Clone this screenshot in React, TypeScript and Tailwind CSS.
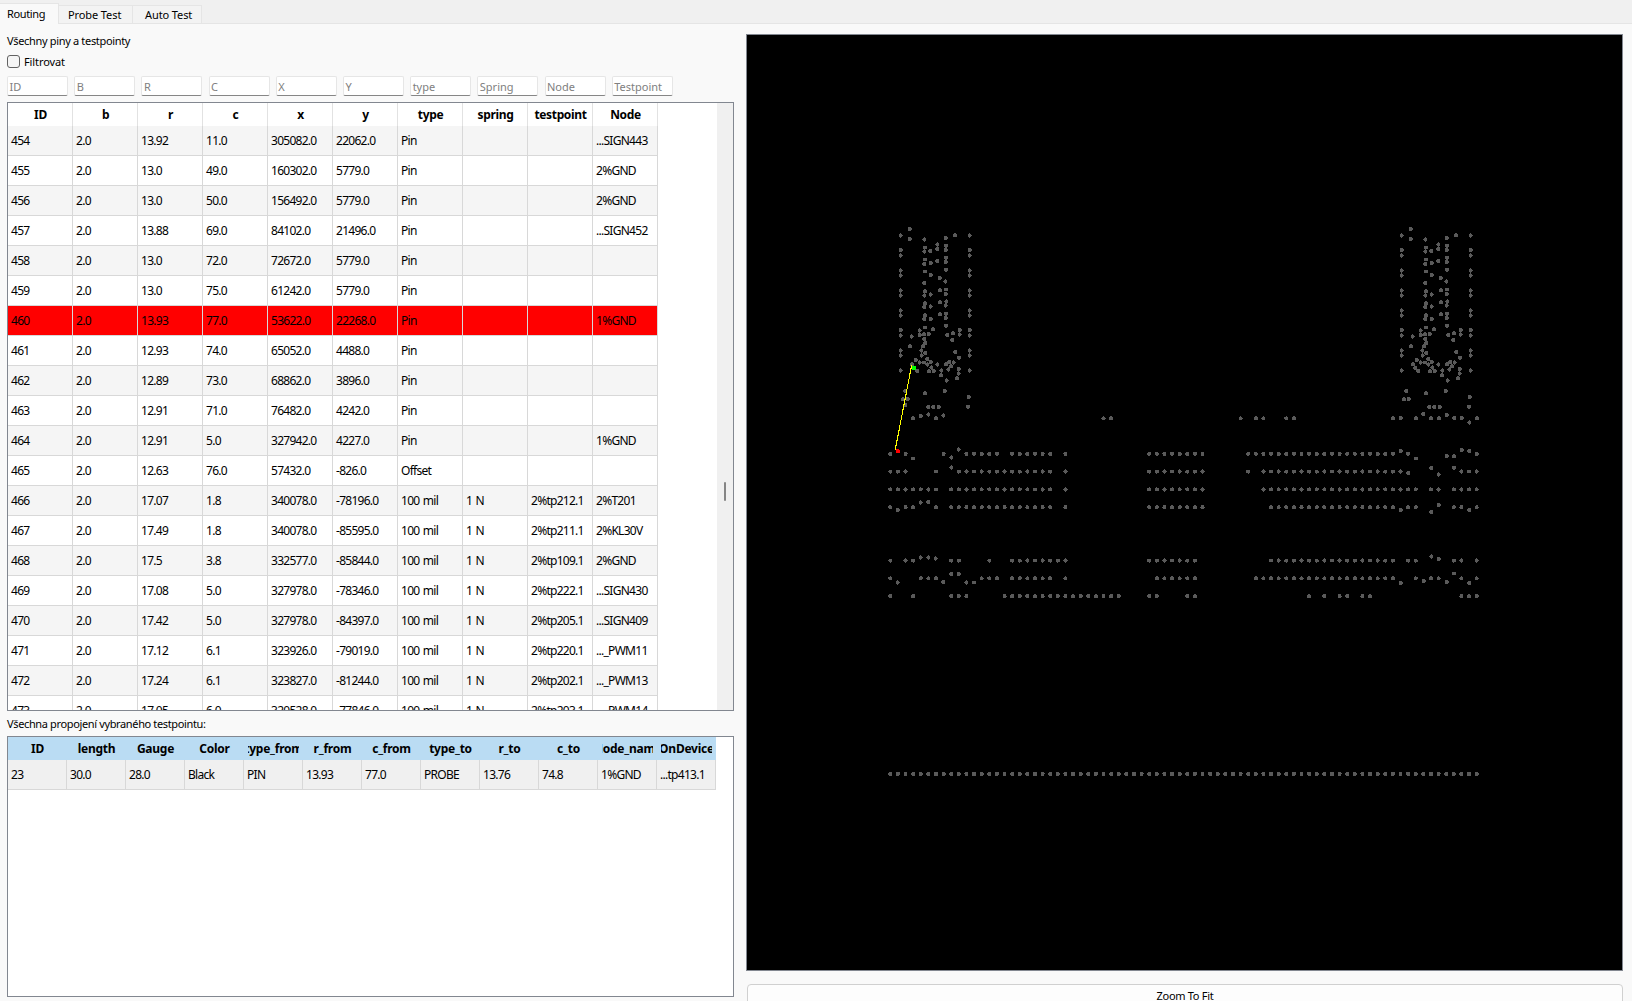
import React from "react";

const FILTERS = ["ID", "B", "R", "C", "X", "Y", "type", "Spring", "Node", "Testpoint"];
const PIN_HEADERS = ["ID", "b", "r", "c", "x", "y", "type", "spring", "testpoint", "Node"];
const PINS: string[][] = [
  ["454", "2.0", "13.92", "11.0", "305082.0", "22062.0", "Pin", "", "", "...SIGN443"],
  ["455", "2.0", "13.0", "49.0", "160302.0", "5779.0", "Pin", "", "", "2%GND"],
  ["456", "2.0", "13.0", "50.0", "156492.0", "5779.0", "Pin", "", "", "2%GND"],
  ["457", "2.0", "13.88", "69.0", "84102.0", "21496.0", "Pin", "", "", "...SIGN452"],
  ["458", "2.0", "13.0", "72.0", "72672.0", "5779.0", "Pin", "", "", ""],
  ["459", "2.0", "13.0", "75.0", "61242.0", "5779.0", "Pin", "", "", ""],
  ["460", "2.0", "13.93", "77.0", "53622.0", "22268.0", "Pin", "", "", "1%GND"],
  ["461", "2.0", "12.93", "74.0", "65052.0", "4488.0", "Pin", "", "", ""],
  ["462", "2.0", "12.89", "73.0", "68862.0", "3896.0", "Pin", "", "", ""],
  ["463", "2.0", "12.91", "71.0", "76482.0", "4242.0", "Pin", "", "", ""],
  ["464", "2.0", "12.91", "5.0", "327942.0", "4227.0", "Pin", "", "", "1%GND"],
  ["465", "2.0", "12.63", "76.0", "57432.0", "-826.0", "Offset", "", "", ""],
  ["466", "2.0", "17.07", "1.8", "340078.0", "-78196.0", "100 mil", "1 N", "2%tp212.1", "2%T201"],
  ["467", "2.0", "17.49", "1.8", "340078.0", "-85595.0", "100 mil", "1 N", "2%tp211.1", "2%KL30V"],
  ["468", "2.0", "17.5", "3.8", "332577.0", "-85844.0", "100 mil", "1 N", "2%tp109.1", "2%GND"],
  ["469", "2.0", "17.08", "5.0", "327978.0", "-78346.0", "100 mil", "1 N", "2%tp222.1", "...SIGN430"],
  ["470", "2.0", "17.42", "5.0", "327978.0", "-84397.0", "100 mil", "1 N", "2%tp205.1", "...SIGN409"],
  ["471", "2.0", "17.12", "6.1", "323926.0", "-79019.0", "100 mil", "1 N", "2%tp220.1", "..._PWM11"],
  ["472", "2.0", "17.24", "6.1", "323827.0", "-81244.0", "100 mil", "1 N", "2%tp202.1", "..._PWM13"],
  ["473", "2.0", "17.05", "6.0", "320528.0", "-77846.0", "100 mil", "1 N", "2%tp203.1", "..._PWM14"],
];
const LINK_HEADERS = ["ID", "length", "Gauge", "Color", "type_from", "r_from", "c_from", "type_to", "r_to", "c_to", "Node_name", "OnDevice"];
const LINK = ["23", "30.0", "28.0", "Black", "PIN", "13.93", "77.0", "PROBE", "13.76", "74.8", "1%GND", "...tp413.1"];

/* Regular board rows: y followed by inclusive column ranges on the 7.615px grid. */
const GRID_ROWS: [number, number[][]][] = [
  [418.2, [[28, 29], [46, 46], [48, 49], [52, 53]]],
  [453.7, [[0, 0], [2, 2], [7, 7], [10, 14], [16, 21], [23, 23], [34, 41], [47, 66], [68, 68], [77, 77]]],
  [471.4, [[0, 2], [6, 6], [9, 21], [23, 23], [34, 41], [47, 47], [49, 67], [75, 77]]],
  [489.3, [[0, 6], [8, 21], [23, 23], [34, 41], [49, 69], [71, 72], [74, 77]]],
  [507.1, [[0, 0], [2, 3], [6, 6], [8, 21], [23, 23], [34, 41], [50, 66], [68, 69], [74, 75], [77, 77]]],
  [560.4, [[0, 0], [2, 3], [8, 9], [13, 13], [16, 23], [34, 40], [50, 66], [68, 69], [74, 75], [77, 77]]],
  [578.2, [[0, 0], [4, 6], [12, 14], [16, 21], [23, 23], [35, 40], [48, 66], [69, 69], [71, 72], [75, 75], [77, 77]]],
  [596, [[0, 0], [3, 3], [8, 10], [15, 30], [34, 35], [39, 40], [55, 55], [57, 57], [59, 60], [62, 63], [75, 77]]],
  [773.8, [[0, 77]]],
];

/* Probe cluster that appears on both boards, in thirds of a pixel. */
const CLUSTER: number[][] = [
  [92, 41], [92, 71], [136, 73], [228, 60], [200, 69], [65, 61], [272, 61],
  [138, 97], [136, 109], [154, 107], [175, 88], [175, 101], [201, 92], [200, 104],
  [138, 133], [136, 146], [155, 144], [175, 137], [201, 128], [200, 141],
  [138, 169], [155, 180], [201, 164], [182, 188], [136, 204], [199, 199],
  [138, 228], [136, 241], [155, 238], [183, 225], [201, 223], [200, 236],
  [138, 264], [136, 276], [155, 274], [183, 261], [202, 259], [200, 271],
  [138, 300], [136, 312], [155, 311], [183, 297], [201, 296], [200, 308],
  [65, 105], [65, 121], [65, 166], [65, 181], [65, 226], [65, 241], [65, 286], [65, 301],
  [65, 345], [65, 361], [65, 406], [65, 421], [65, 466],
  [272, 105], [272, 121], [272, 166], [272, 181], [272, 226], [272, 241], [272, 286], [272, 301],
  [272, 345], [272, 361], [272, 406], [272, 421], [272, 466],
  [138, 337], [162, 342], [201, 332], [122, 346], [122, 360], [135, 357], [149, 357], [98, 364],
  [222, 354], [242, 345], [242, 358], [205, 359], [136, 371], [220, 374], [139, 383], [93, 393],
  [132, 393], [127, 406], [139, 413], [128, 421], [229, 410], [240, 428], [145, 431], [110, 434],
  [122, 442], [135, 442], [155, 440], [99, 447], [145, 448], [175, 448], [201, 447], [211, 440],
  [224, 442], [216, 453], [106, 458], [157, 457], [115, 467], [150, 468], [164, 468], [187, 466],
  [208, 463], [239, 462], [239, 475], [186, 480], [234, 489], [203, 496], [79, 527], [138, 534],
  [197, 528], [269, 546], [72, 552], [86, 552], [148, 575], [163, 575], [179, 575], [267, 575],
];
const RIGHT_ONLY: number[][] = [
  [39, 609], [62, 609], [108, 609], [130, 597], [153, 609], [177, 609], [200, 600], [223, 609], [245, 609], [268, 622], [291, 609],
];
const LEFT_ONLY: number[][] = [[79, 570], [102, 609], [125, 602], [148, 598], [171, 609], [193, 601]];

/* Points shifted off the grid; thirds of a pixel from each origin. */
const LOOSE_LEFT: number[][] = [
  [99, 55], [214, 52], [236, 28], [214, 82], [53, 209], [122, 187], [145, 186], [122, 352], [145, 352], [167, 355],
  [53, 427], [190, 425], [214, 402], [236, 402], [259, 427], [282, 427],
];
const LOOSE_RIGHT: number[][] = [
  [332, 152], [378, 175], [470, 167], [492, 168], [515, 149], [538, 152], [355, 219], [424, 203], [446, 223], [492, 203],
  [332, 330], [424, 335], [446, 315], [538, 330], [424, 469], [446, 476], [332, 549], [401, 543], [470, 545], [492, 520], [538, 549],
];

const place = (list: number[][], ox: number, oy: number) => list.map(([x, y]) => [ox + x / 3, oy + y / 3]);

const POINTS: number[][] = [
  ...GRID_ROWS.flatMap(([y, ranges]) =>
    ranges.flatMap(([a, b]) => Array.from({ length: b - a + 1 }, (_, i) => [890.3 + 7.615 * (a + i), y])),
  ),
  ...place(CLUSTER, 1380, 215),
  ...place(RIGHT_ONLY, 1380, 215),
  ...place(CLUSTER, 879, 215),
  ...place(LEFT_ONLY, 879, 215),
  ...place(LOOSE_LEFT, 880, 440),
  ...place(LOOSE_RIGHT, 1290, 400),
];

function Board() {
  return (
    <svg className="block h-full w-full" viewBox="747 35 875 935" shapeRendering="crispEdges">
      {POINTS.map(([x, y], i) => (
        <circle key={i} cx={x} cy={y + 0.15} r={2.1} fill="#5a5a5a" />
      ))}
      <path d="M911.7 365L895.3 449.5" stroke="#ffff00" strokeWidth="1.1" />
      <rect x="912" y="366" width="4" height="4" fill="#00ff00" />
      <circle cx="897.8" cy="451.2" r="2.2" fill="#ff0000" />
    </svg>
  );
}

function PinTable() {
  return (
    <div className="mt-[6px] flex h-[609px] w-[727px] border border-[#828790] bg-white">
      <div className="w-[709px] overflow-hidden">
        <div className="flex h-[23px]">
          {PIN_HEADERS.map((h) => (
            <div key={h} className="w-[65px] shrink-0 border-r border-[#e2e2e2] pl-px text-center text-[12px] leading-[24px] font-bold tracking-[-0.35px]">
              {h}
            </div>
          ))}
        </div>
        {PINS.map((row, r) => (
          <div key={r} className={`flex h-[30px] w-[650px] ${row[0] === "460" ? "bg-[#ff0000]" : r % 2 ? "bg-white" : "bg-[#f5f5f5]"}`}>
            {row.map((cell, c) => (
              <div key={c} className="w-[65px] shrink-0 overflow-hidden border-r border-b border-[#d8d8d8] pl-[3px] leading-[30px] tracking-[-0.72px] [word-spacing:1px] whitespace-nowrap">
                {cell}
              </div>
            ))}
          </div>
        ))}
      </div>
      <div className="flex w-4 justify-center bg-[#f0f0f0] pt-[379px]">
        <div className="h-[19px] w-[2px] rounded-full bg-[#858585]" />
      </div>
    </div>
  );
}

function LinkTable() {
  return (
    <div className="h-[261px] w-[727px] overflow-hidden border border-[#828790] bg-white">
      <div className="flex h-[23px] w-[708px] bg-[#badcf3]">
        {LINK_HEADERS.map((h) => (
          <div key={h} className="flex w-[59px] shrink-0 px-1">
            <div className="flex flex-1 justify-center overflow-hidden text-[12px] leading-[24px] font-bold tracking-[-0.25px] whitespace-nowrap">
              <span className="shrink-0">{h}</span>
            </div>
          </div>
        ))}
      </div>
      <div className="flex h-[30px] w-[708px] bg-[#f0f0f0]">
        {LINK.map((cell, c) => (
          <div key={c} className="w-[59px] shrink-0 overflow-hidden border-r border-b border-[#d8d8d8] pl-[3px] leading-[30px] tracking-[-0.72px] whitespace-nowrap">
            {cell}
          </div>
        ))}
      </div>
    </div>
  );
}

export default function App() {
  return (
    <div className="flex h-[1001px] w-[1632px] flex-col overflow-hidden bg-[#f9f9f9] font-['Noto_Sans',sans-serif] text-[12px] text-black">
      <div className="flex h-[24px] shrink-0 items-end bg-[#f0f0f0]">
        <div className="h-[21px] w-[59px] border-t border-r border-[#e5e5e5] bg-[#f9f9f9] pl-[7px] text-[11px] leading-[20px] tracking-[-0.35px]">Routing</div>
        <div className="h-[19px] w-[74px] border-t border-r border-b border-[#e5e5e5] bg-[#f3f3f3] pl-[9px] text-[11px] leading-[18px] tracking-[-0.1px]">Probe Test</div>
        <div className="h-[19px] w-[69px] border-t border-r border-b border-[#e5e5e5] bg-[#f3f3f3] pl-[12px] text-[11px] leading-[18px] tracking-[-0.1px]">Auto Test</div>
        <div className="h-px flex-1 bg-[#e5e5e5]" />
      </div>
      <div className="flex min-h-0 flex-1">
        <div className="flex w-[734px] shrink-0 flex-col pl-[7px]">
          <div className="mt-[9px] h-[16px] text-[11px] leading-[16px] tracking-[-0.33px]">Všechny piny a testpointy</div>
          <div className="mt-[4px] flex h-[17px] items-center gap-1">
            <div className="h-[13px] w-[13px] rounded-[3px] border border-[#626262] bg-[#f5f5f5]" />
            <span className="text-[11px] leading-[16px] tracking-[-0.1px]">Filtrovat</span>
          </div>
          <div className="mt-[6px] flex h-[20px] gap-[6.2px]">
            {FILTERS.map((f) => (
              <div key={f} className="h-[20px] w-[61px] rounded-[2px] border border-[#e6e6e6] border-b-[#868686] bg-white pl-[1.5px] text-[11px] leading-[20px] text-[#808080]">
                {f}
              </div>
            ))}
          </div>
          <PinTable />
          <div className="h-[25px] text-[11px] leading-[26px] tracking-[-0.36px]">Všechna propojení vybraného testpointu:</div>
          <LinkTable />
        </div>
        <div className="ml-[12px] flex w-[877px] flex-col pt-[10px]">
          <div className="h-[937px] shrink-0 border border-[#828790] bg-black">
            <Board />
          </div>
          <div className="mt-[13px] ml-px h-[24px] shrink-0 rounded-[4px] border border-[#d0d0d0] bg-[#fdfdfd] text-center text-[11px] leading-[21px] tracking-[-0.3px]">Zoom To Fit</div>
        </div>
      </div>
    </div>
  );
}
